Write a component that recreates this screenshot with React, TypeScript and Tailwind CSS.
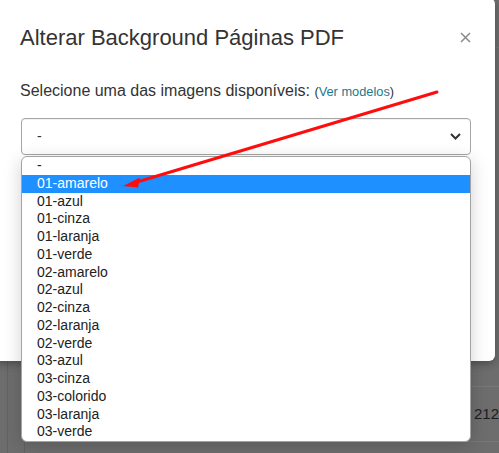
import React from 'react';

const options = [
  '-',
  '01-amarelo',
  '01-azul',
  '01-cinza',
  '01-laranja',
  '01-verde',
  '02-amarelo',
  '02-azul',
  '02-cinza',
  '02-laranja',
  '02-verde',
  '03-azul',
  '03-cinza',
  '03-colorido',
  '03-laranja',
  '03-verde',
];

function Backdrop() {
  // dimmed page behind the modal (a table)
  return (
    <div className="flex h-full w-full bg-[#6d6d6d]">
      <div className="w-[8px] border-r border-[#626262]" />
      <div className="w-[17px] border-r border-[#626262]" />
      <div className="flex flex-1 flex-col">
        <div className="h-[48px] border-b border-[#777]" />
        <div className="h-[339px] border-b border-[#777]" />
        <div className="flex h-[55px] items-center justify-end border-b border-[#777]">
          <span className="text-[15px] text-[#1c1c1c]">212</span>
        </div>
        <div className="flex-1" />
      </div>
    </div>
  );
}

export default function App() {
  return (
    <div
      className="relative h-[453px] w-[499px] overflow-hidden"
      style={{ fontFamily: '"Liberation Sans", Arial, sans-serif' }}
    >
      <Backdrop />

      {/* modal */}
      <div className="absolute left-[-6px] top-[-2px] flex h-[363px] w-[501px] flex-col rounded-md bg-white pl-[26px] shadow-[0_3px_9px_rgba(0,0,0,0.3)]">
        <div className="mt-[27px] flex h-[26px] items-center">
          <h4 className="text-[22px] leading-[26px] text-[#333]">Alterar Background Páginas PDF</h4>
          <svg className="ml-[116px] mt-[-2px]" width="11" height="11" viewBox="0 0 11 11">
            <path d="M1 1 L10 10 M10 1 L1 10" stroke="#8a8a8a" strokeWidth="1.5" fill="none" />
          </svg>
        </div>

        <div className="mt-[28px] h-[24px] text-[16px] leading-[24px] text-[#333]">
          Selecione uma das imagens disponíveis:{' '}
          <span className="text-[12.8px]">
            (<span className="text-[#1e7889]">Ver modelos</span>)
          </span>
        </div>

        <div className="ml-[1px] mt-[15px] flex h-[37px] w-[450px] items-center justify-between rounded-[4px] border border-[#a6a6a6] pl-[15px] pr-[5px] shadow-[inset_0_1px_1px_rgba(0,0,0,0.06)]">
          <span className="text-[14px] text-[#333]">-</span>
          <svg width="11" height="7" viewBox="0 0 11 7" className="mr-[4px]">
            <path d="M1 1 L5.5 5.5 L10 1" stroke="#333" strokeWidth="2" fill="none" />
          </svg>
        </div>

        <div className="mt-[155px] flex justify-end pr-[28px]">
          <div className="h-[35px] w-[80px] rounded-[3px] bg-[#8db44f]" />
        </div>
      </div>

      {/* open select list */}
      <div className="absolute left-[21px] top-[156px] w-[450px] overflow-hidden rounded-md border border-[#a3a3a3] bg-white shadow-[0_4px_18px_rgba(0,0,0,0.18)]">
        {options.map((o, i) => (
          <div
            key={o}
            className={
              i === 1
                ? 'h-[17.75px] bg-[#1e90ff] pl-[15px] text-[14px] leading-[17.75px] text-white'
                : 'h-[17.75px] pl-[15px] text-[14px] leading-[17.75px] text-[#222]'
            }
          >
            {o}
          </div>
        ))}
      </div>

      {/* red annotation arrow */}
      <svg className="pointer-events-none absolute left-0 top-0" width="499" height="453">
        <line x1="437" y1="92" x2="137" y2="182" stroke="#ff0d0d" strokeWidth="3" strokeLinecap="round" />
        <polygon points="123,186 140,177.5 138,187.5" fill="#ff0d0d" />
      </svg>
    </div>
  );
}
